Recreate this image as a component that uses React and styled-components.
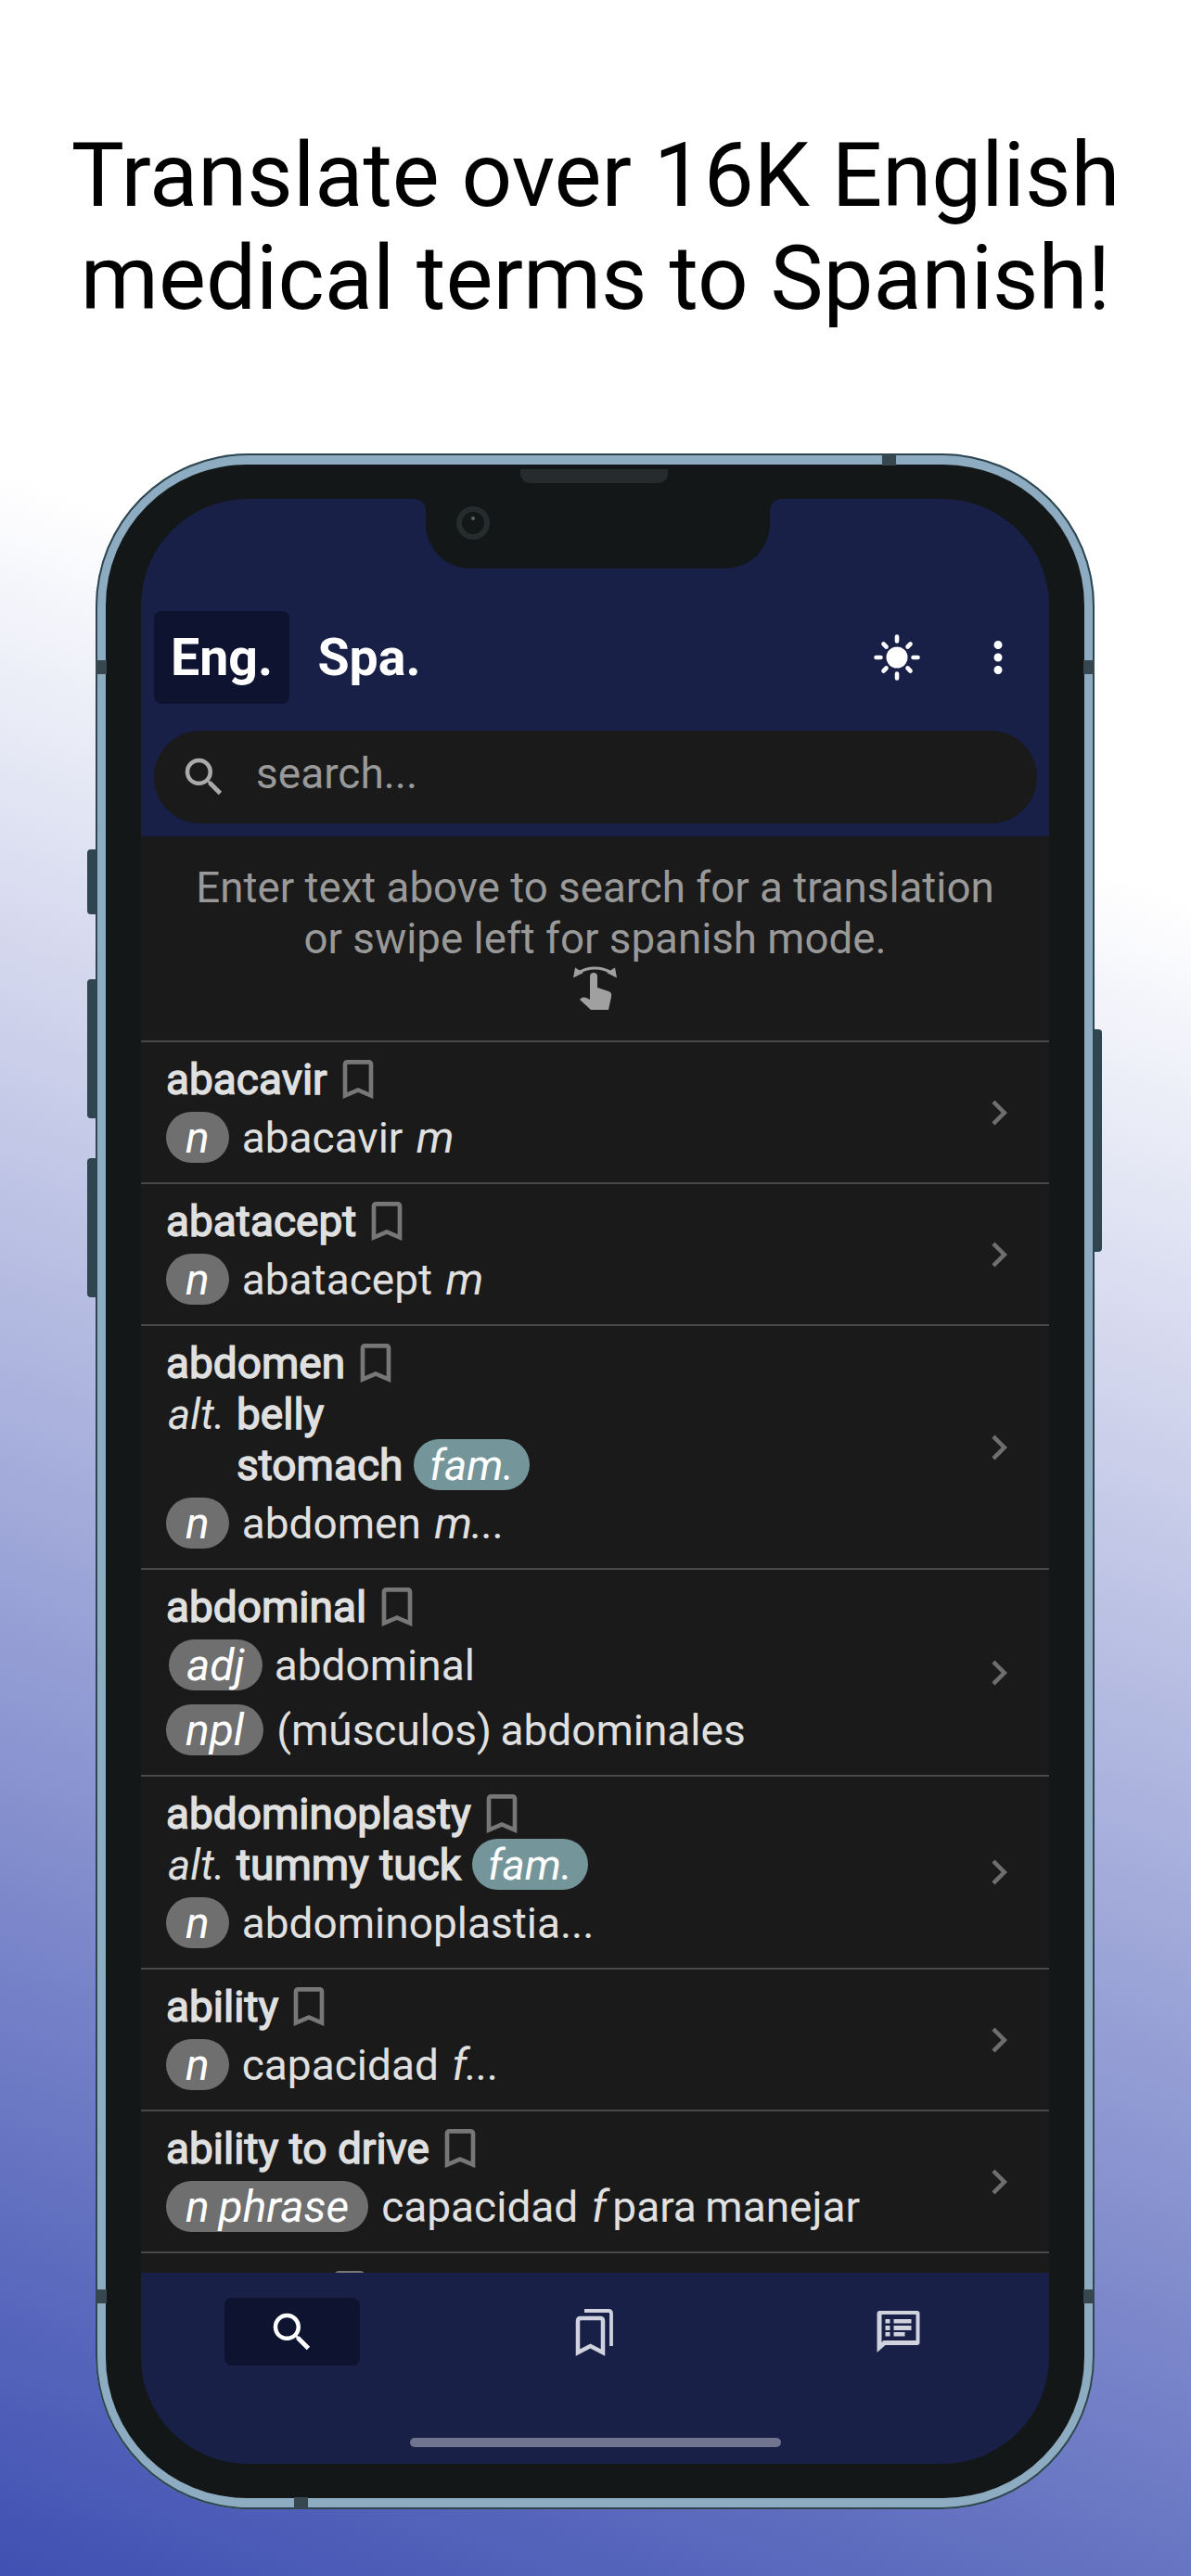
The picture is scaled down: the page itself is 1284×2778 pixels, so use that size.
import React from 'react'
import styled, { createGlobalStyle } from 'styled-components'

const GlobalStyle = createGlobalStyle`
  html, body { margin: 0; padding: 0; }
  body { font-family: Roboto, "Liberation Sans", sans-serif; }
`

const Page = styled.div`
  width: 1284px;
  height: 2778px;
  overflow: hidden;
  padding-top: 134px;
  box-sizing: border-box;
  background: linear-gradient(200deg, #ffffff 30%, #3f50b2 100%);
`

const Headline = styled.h1`
  margin: 0;
  font-size: 96px;
  font-weight: 400;
  line-height: 111px;
  text-align: center;
  color: #000;
`

const Phone = styled.div`
  position: relative;
  width: 1077px;
  height: 2217px;
  box-sizing: border-box;
  margin: 133px 0 0 103px;
  padding: 12px 11px 12px 11px;
  border-radius: 165px;
  background: #8dacc1;
  box-shadow: inset 0 0 0 2px #2f4550;
`

const Bezel = styled.div`
  height: 100%;
  box-sizing: border-box;
  padding: 37px 38px;
  border-radius: 152px;
  background: #131718;
`

const SideButton = styled.div`
  position: absolute;
  width: 9px;
  top: ${p => p.$top}px;
  height: ${p => p.$h}px;
  ${p => (p.$right ? 'right: -8px; border-radius: 0 4px 4px 0;' : 'left: -9px; border-radius: 4px 0 0 4px;')}
  background: #2f4550;
`

const AntennaH = styled.div`
  position: absolute;
  left: ${p => p.$left}px;
  width: 15px;
  height: 13px;
  ${p => (p.$bottom ? 'bottom: 0;' : 'top: 0;')}
  background: #37474f;
`

const AntennaV = styled.div`
  position: absolute;
  top: ${p => p.$top}px;
  width: 12px;
  height: 15px;
  ${p => (p.$right ? 'right: 0;' : 'left: 0;')}
  background: #37474f;
`

const Speaker = styled.div`
  position: absolute;
  top: 17px;
  left: 458px;
  width: 159px;
  height: 15px;
  border-radius: 0 0 10px 10px;
  background: #262b2d;
  z-index: 2;
`

const Notch = styled.div`
  position: absolute;
  top: 49px;
  left: 356px;
  width: 371px;
  height: 75px;
  border-radius: 0 0 48px 48px;
  background: #131718;
  z-index: 1;
  &::after {
    content: '';
    position: absolute;
    top: 0;
    left: -12px;
    width: 12px;
    height: 12px;
    background: radial-gradient(circle at 0 100%, transparent 11.5px, #131718 12px);
  }
`

const NotchFilletRight = styled.div`
  position: absolute;
  top: 49px;
  left: 727px;
  width: 12px;
  height: 12px;
  background: radial-gradient(circle at 100% 100%, transparent 11.5px, #131718 12px);
  z-index: 1;
`

const Camera = styled.div`
  position: absolute;
  top: 57px;
  left: 389px;
  width: 36px;
  height: 36px;
  box-sizing: border-box;
  border: 6px solid #262b2d;
  border-radius: 50%;
  z-index: 2;
  &::after {
    content: '';
    position: absolute;
    top: 5px;
    left: 10px;
    width: 4px;
    height: 4px;
    border-radius: 50%;
    background: #5c6365;
  }
`

const Screen = styled.div`
  height: 100%;
  display: flex;
  flex-direction: column;
  overflow: hidden;
  border-radius: 115px;
  background: #1a1a1a;
`

const TopBar = styled.div`
  background: #182048;
  padding: 121px 13px 14px 14px;
`

const LangRow = styled.div`
  display: flex;
  align-items: center;
  gap: 13px;
  height: 100px;
`

const LangTab = styled.div`
  width: 146px;
  height: 100px;
  display: flex;
  align-items: center;
  justify-content: center;
  border-radius: 8px;
  font-size: 55.5px;
  font-weight: 700;
  color: #fff;
  background: ${p => (p.$active ? '#0e1330' : 'transparent')};
`

const HeaderIcons = styled.div`
  margin-left: auto;
  display: flex;
  align-items: center;
  gap: 55px;
  margin-right: 15px;
`

const SearchBar = styled.div`
  margin-top: 29px;
  height: 100px;
  display: flex;
  align-items: center;
  gap: 29px;
  padding-left: 27px;
  border-radius: 50px;
  background: #1a1a1a;
  color: #999;
  font-size: 46px;
`

const SearchText = styled.span`
  padding-bottom: 9px;
`

const Icon = styled.svg`
  display: block;
  flex: none;
  fill: currentColor;
  width: ${p => p.$size}px;
  height: ${p => p.$size}px;
  color: ${p => p.$color || '#fff'};
`

const ListArea = styled.div`
  flex: 1;
  min-height: 0;
  overflow: hidden;
`

const Hint = styled.div`
  height: 220px;
  box-sizing: border-box;
  padding-top: 28px;
  display: flex;
  flex-direction: column;
  align-items: center;
  font-size: 45.7px;
  line-height: 55px;
  text-align: center;
  color: #999;
`

const HandWrap = styled.div`
  margin-top: -6px;
`

const Row = styled.div`
  display: flex;
  align-items: center;
  border-top: 2px solid #484848;
  padding: 0 27px;
`

const RowBody = styled.div`
  flex: 1;
  min-width: 0;
  padding: 12px 0 21px;
`

const Term = styled.div`
  display: flex;
  align-items: center;
  height: 55px;
  padding-left: ${p => p.$indent || 0}px;
  font-size: 46px;
  font-weight: 400;
  color: #e0e0e0;
  -webkit-text-stroke: 1.4px #e0e0e0;
`

const BookmarkMark = styled.span`
  margin-left: 5px;
  -webkit-text-stroke: 0;
`

const Alt = styled.div`
  display: flex;
  align-items: center;
  height: 55px;
  font-size: 46px;
  color: #e0e0e0;
`

const AltLabel = styled.span`
  width: 74px;
  padding-left: 2px;
  font-style: italic;
`

const AltWord = styled.span`
  -webkit-text-stroke: 1.4px #e0e0e0;
`

const Defs = styled.div`
  display: flex;
  align-items: center;
  margin-top: ${p => p.$gap || 8}px;
  height: 55px;
  font-size: 46px;
  word-spacing: -2px;
  color: #e0e0e0;
  white-space: pre;
`

const Pill = styled.span`
  height: 55px;
  display: inline-flex;
  align-items: center;
  padding: 0 ${p => p.$pad || 21}px;
  margin-left: ${p => p.$inset || 0}px;
  margin-right: ${p => (p.$inset ? 13 : 14)}px;
  border-radius: 28px;
  background: #6f6f6f;
  color: #fff;
  font-style: italic;
  font-size: 48px;
`

const FamPill = styled(Pill)`
  margin: 0 0 0 12px;
  padding: 0 17px;
  background: #74969b;
  font-size: 46px;
`

const Gender = styled.i`
  margin-left: 5px;
  margin-right: ${p => (p.$tight ? -3 : 0)}px;
  font-size: 48px;
`

const BottomTabs = styled.div`
  height: 206px;
  flex: none;
  position: relative;
  display: grid;
  grid-template-columns: repeat(3, 1fr);
  justify-items: center;
  align-items: start;
  background: #182048;
  padding-top: 27px;
  box-sizing: border-box;
`

const Tab = styled.div`
  width: 146px;
  height: 73px;
  display: flex;
  align-items: center;
  justify-content: center;
  border-radius: 8px;
  background: ${p => (p.$active ? '#0e1330' : 'transparent')};
`

const HomeBar = styled.div`
  position: absolute;
  left: 290px;
  bottom: 18px;
  width: 400px;
  height: 10px;
  border-radius: 5px;
  background: #70748f;
`

const magnify = 'M9.5,3A6.5,6.5 0 0,1 16,9.5C16,11.11 15.41,12.59 14.44,13.73L14.71,14H15.5L20.5,19L19,20.5L14,15.5V14.71L13.73,14.44C12.59,15.41 11.11,16 9.5,16A6.5,6.5 0 0,1 3,9.5A6.5,6.5 0 0,1 9.5,3M9.5,5C7,5 5,7 5,9.5C5,12 7,14 9.5,14C12,14 14,12 14,9.5C14,7 12,5 9.5,5Z'
const dots = 'M12,16A2,2 0 0,1 14,18A2,2 0 0,1 12,20A2,2 0 0,1 10,18A2,2 0 0,1 12,16M12,10A2,2 0 0,1 14,12A2,2 0 0,1 12,14A2,2 0 0,1 10,12A2,2 0 0,1 12,10M12,4A2,2 0 0,1 14,6A2,2 0 0,1 12,8A2,2 0 0,1 10,6A2,2 0 0,1 12,4Z'
const chevron = 'M8.59,16.58L13.17,12L8.59,7.41L10,6L16,12L10,18L8.59,16.58Z'
const bookmark = 'M17,18L12,15.82L7,18V5H17M17,3H7A2,2 0 0,0 5,5V21L12,18L19,21V5C19,3.89 18.1,3 17,3Z'

const SvgIcon = ({ d, size = 54, color }) => (
  <Icon viewBox="0 0 24 24" $size={size} $color={color}><path d={d} /></Icon>
)

const Sun = () => (
  <Icon viewBox="0 0 54 54" $size={54}>
    <circle cx="27" cy="27" r="11.5" />
    <g stroke="#fff" strokeWidth="4.6" strokeLinecap="round">
      <path d="M27 4.5V9.5M27 44.5V49.5M4.5 27H9.5M44.5 27H49.5" />
      <path d="M12.5 12.5L15.5 15.5M41.5 12.5L38.5 15.5M12.5 41.5L15.5 38.5M41.5 41.5L38.5 38.5" />
    </g>
  </Icon>
)

const Hand = () => (
  <Icon viewBox="0 0 65 65" $size={65} $color="#a0a0a0">
    <path d="M14 15Q32 5 51 15" fill="none" stroke="#a0a0a0" strokeWidth="3" />
    <path d="M9 20.5L11 9.5L20 15ZM56 20.5L54 9.5L45 15Z" />
    <path d="M27 19a4 4 0 0 1 8 0V31L47 35C50 36 50.5 38 50 41L47 55H28L16 44C18 41 21 41 23 42L27 44Z" />
  </Icon>
)

const Bookmarks = () => (
  <Icon viewBox="-3 0 70 70" $size={70} $color="#d0d2de">
    <path d="M14 57V23Q14 20 17 20H38Q41 20 41 23V57L27.5 50Z" fill="none" stroke="#d0d2de" strokeWidth="4.5" />
    <path d="M21 12H47Q50 12 50 15V50" fill="none" stroke="#d0d2de" strokeWidth="3.8" />
  </Icon>
)

const Feedback = () => (
  <Icon viewBox="-2.5 0 70 70" $size={70} $color="#d0d2de">
    <path fillRule="evenodd" d="M13 12H53Q56 12 56 15V46Q56 49 53 49H19L10 57V15Q10 12 13 12ZM15 16V46L17 44H52V16Z" />
    <path d="M19 21H24V25.5H19ZM28 21H47V25.5H28ZM19 28H24V33H19ZM28 28H47V33H28ZM19 35H24V39.5H19ZM28 35H40V39.5H28Z" />
  </Icon>
)

const entries = [
  { term: 'abacavir', defs: [{ pill: 'n', text: 'abacavir ', g: 'm' }] },
  { term: 'abatacept', defs: [{ pill: 'n', text: 'abatacept ', g: 'm' }] },
  {
    term: 'abdomen',
    alts: [{ label: 'alt.', word: 'belly' }, { word: 'stomach', fam: true }],
    defs: [{ pill: 'n', text: 'abdomen ', g: 'm', rest: '...' }],
  },
  {
    term: 'abdominal',
    defs: [{ pill: 'adj', inset: 3, pad: 19, text: 'abdominal' }, { pill: 'npl', text: '(músculos) abdominales', gap: 15 }],
  },
  {
    term: 'abdominoplasty',
    alts: [{ label: 'alt.', word: 'tummy tuck', fam: true }],
    defs: [{ pill: 'n', text: 'abdominoplastia...' }],
  },
  { term: 'ability', defs: [{ pill: 'n', text: 'capacidad ', g: 'f', rest: '...' }] },
  { term: 'ability to drive', defs: [{ pill: 'n phrase', text: 'capacidad ', g: 'f', rest: ' para manejar' }] },
]

export default function App() {
  return (
    <Page>
      <GlobalStyle />
      <Headline>Translate over 16K English<br />medical terms to Spanish!</Headline>
      <Phone>
        <SideButton $top={427} $h={70} />
        <SideButton $top={567} $h={150} />
        <SideButton $top={760} $h={150} />
        <SideButton $right $top={621} $h={240} />
        <AntennaH $left={848} />
        <AntennaH $left={214} $bottom />
        <AntennaV $top={223} />
        <AntennaV $top={223} $right />
        <AntennaV $top={1980} />
        <AntennaV $top={1980} $right />
        <Speaker />
        <Notch />
        <NotchFilletRight />
        <Camera />
        <Bezel>
          <Screen>
            <TopBar>
              <LangRow>
                <LangTab $active>Eng.</LangTab>
                <LangTab>Spa.</LangTab>
                <HeaderIcons>
                  <Sun />
                  <SvgIcon d={dots} />
                </HeaderIcons>
              </LangRow>
              <SearchBar>
                <SvgIcon d={magnify} color="#aaa" />
                <SearchText>search...</SearchText>
              </SearchBar>
            </TopBar>
            <ListArea>
              <Hint>
                Enter text above to search for a translation
                <br />
                or swipe left for spanish mode.
                <HandWrap><Hand /></HandWrap>
              </Hint>
              {entries.map(entry => (
                <Row key={entry.term}>
                  <RowBody>
                    <Term>
                      {entry.term}
                      <BookmarkMark><SvgIcon d={bookmark} size={56} color="#777" /></BookmarkMark>
                    </Term>
                    {entry.alts && entry.alts.map(alt => (
                      <Alt key={alt.word}>
                        <AltLabel>{alt.label}</AltLabel>
                        <AltWord>{alt.word}</AltWord>
                        {alt.fam && <FamPill>fam.</FamPill>}
                      </Alt>
                    ))}
                    {entry.defs.map(def => (
                      <Defs key={def.pill} $gap={def.gap}>
                        <Pill $inset={def.inset} $pad={def.pad}>{def.pill}</Pill>
                        {def.text}
                        {def.g && <Gender $tight={!!def.rest}>{def.g}</Gender>}
                        {def.rest}
                      </Defs>
                    ))}
                  </RowBody>
                  <SvgIcon d={chevron} color="#6e6e6e" />
                </Row>
              ))}
              <Row>
                <RowBody>
                  <Term $indent={165}>
                    <BookmarkMark><SvgIcon d={bookmark} size={56} color="#777" /></BookmarkMark>
                  </Term>
                </RowBody>
              </Row>
            </ListArea>
            <BottomTabs>
              <Tab $active><SvgIcon d={magnify} /></Tab>
              <Tab><Bookmarks /></Tab>
              <Tab><Feedback /></Tab>
              <HomeBar />
            </BottomTabs>
          </Screen>
        </Bezel>
      </Phone>
    </Page>
  )
}
